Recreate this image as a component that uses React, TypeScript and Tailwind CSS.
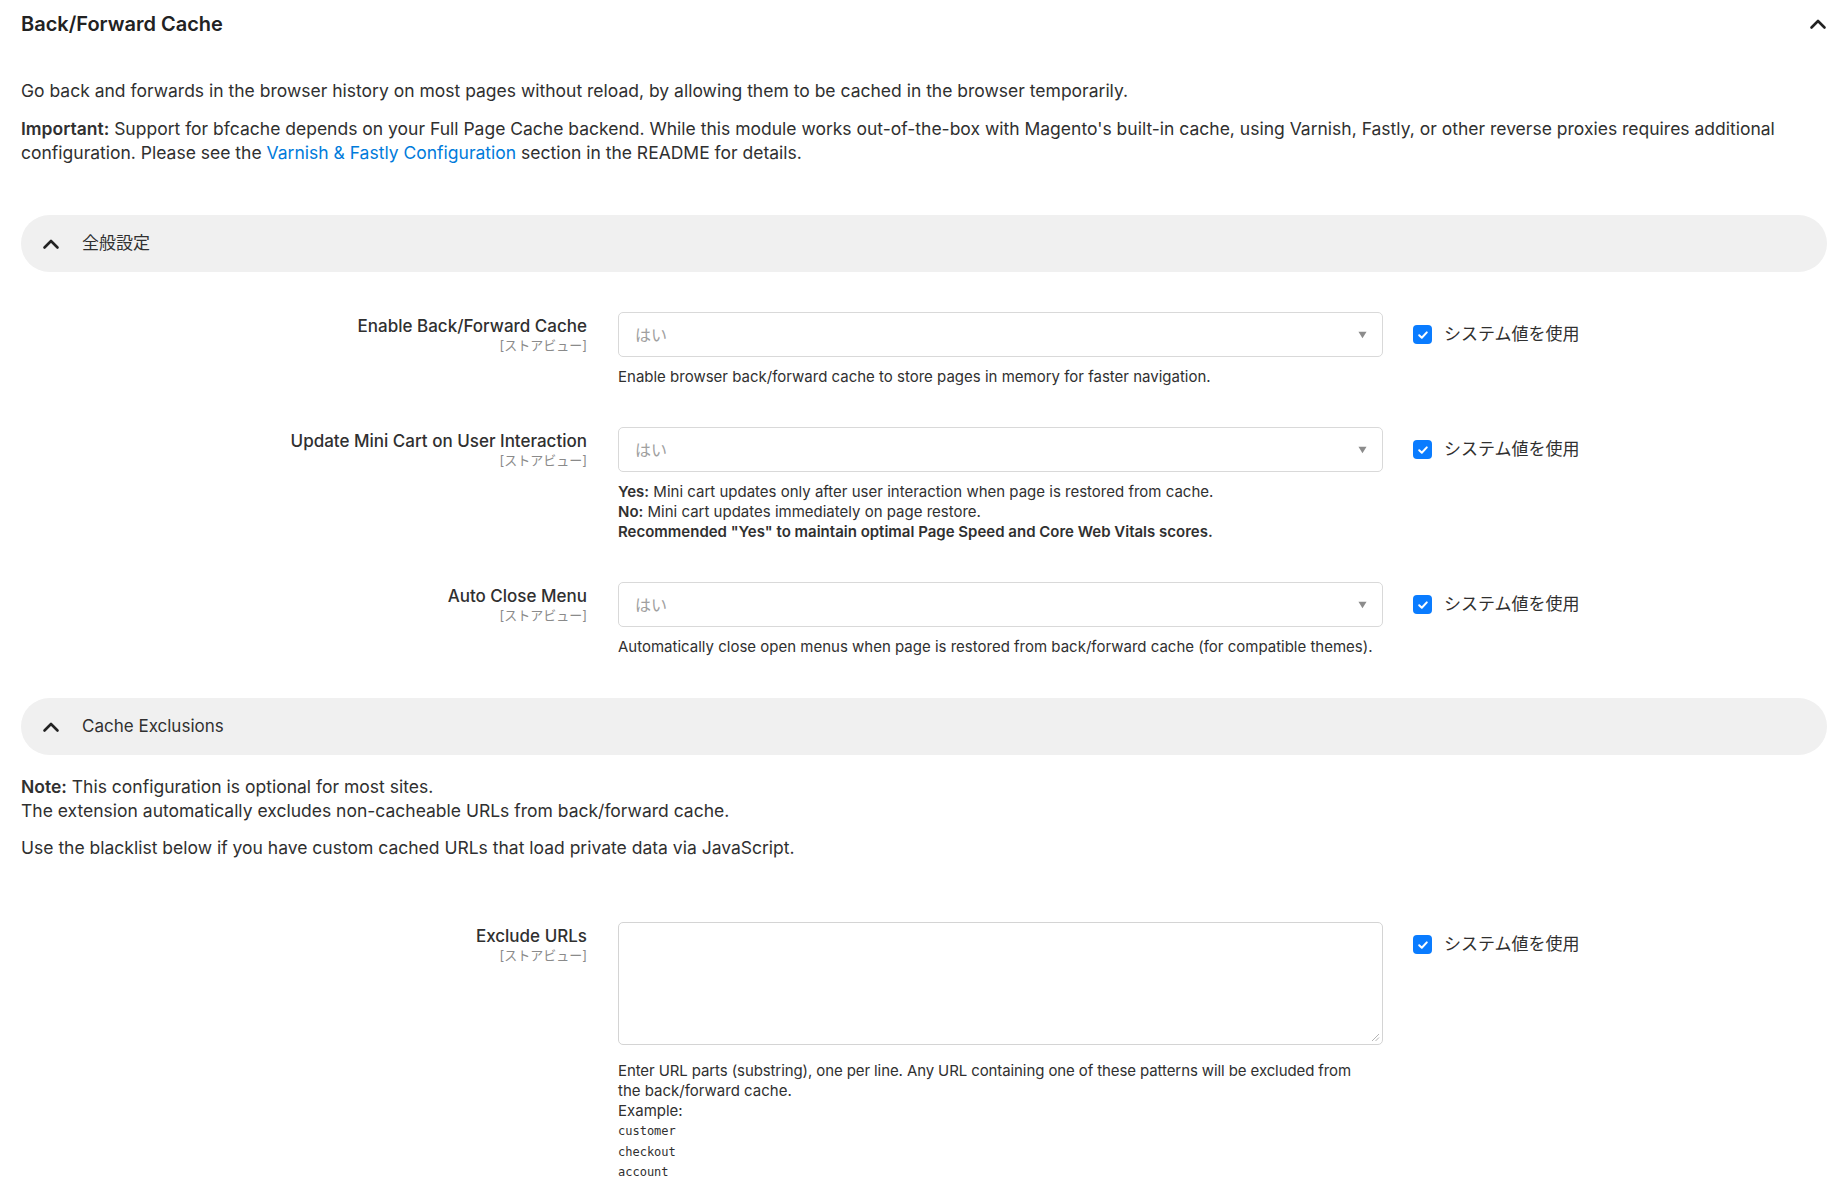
import type { ReactNode } from 'react'

const sans = "font-['Inter','Noto_Sans_CJK_JP',sans-serif]"

function Chevron({ className = '' }: { className?: string }) {
  return (
    <svg viewBox="0 0 18 12" className={className} fill="none">
      <path d="M2.5 9.5 9 3l6.5 6.5" stroke="#222" strokeWidth="2.6" strokeLinecap="round" strokeLinejoin="round" />
    </svg>
  )
}

function SectionPill({ title }: { title: string }) {
  return (
    <div className="flex h-[57px] items-center gap-[22px] rounded-full bg-[#f0f0f0] pl-[21px]">
      <Chevron className="h-[12px] w-[18px]" />
      <span className="text-[17px] text-[#303030]">{title}</span>
    </div>
  )
}

function SystemValue() {
  return (
    <div className="ml-[30px] flex h-[45px] shrink-0 items-center gap-[12px]">
      <span className="flex h-[19px] w-[19px] items-center justify-center rounded-[4px] bg-[#0a7cff]">
        <svg viewBox="0 0 12 12" className="h-[12px] w-[12px]" fill="none">
          <path d="M2.2 6.3 4.8 8.8 9.8 3.4" stroke="white" strokeWidth="2" strokeLinecap="round" strokeLinejoin="round" />
        </svg>
      </span>
      <span className="text-[17px] text-[#303030]">システム値を使用</span>
    </div>
  )
}

function Row({ label, field, help, gap = 'mt-[10px]' }: { label: string; field: ReactNode; help: ReactNode; gap?: string }) {
  return (
    <div className="flex">
      <div className="w-[566px] shrink-0 pt-[4px] text-right">
        <div className="text-[17px] leading-[20px] font-medium text-[#303030]">{label}</div>
        <div className="text-[13px] leading-[18px] text-[#8a8a8a]">[ストアビュー]</div>
      </div>
      <div className="ml-[31px] w-[765px] shrink-0">
        {field}
        <div className={`${gap} text-[15px] leading-[20px] text-[#303030]`}>{help}</div>
      </div>
      <SystemValue />
    </div>
  )
}

function Select() {
  return (
    <div className="flex h-[45px] items-center justify-between rounded-[5px] border border-[#d9d9d9] bg-white pr-[15px] pl-[16px]">
      <span className="text-[16px] text-[#a0a0a0]">はい</span>
      <svg viewBox="0 0 10 8" className="h-[8px] w-[9px]">
        <path d="M0.5 0.5h9L5 7.5z" fill="#8c8c8c" />
      </svg>
    </div>
  )
}

function TextArea() {
  return (
    <div className="relative h-[123px] rounded-[5px] border border-[#d4d4d4] bg-white">
      <svg viewBox="0 0 10 10" className="absolute right-[2px] bottom-[2px] h-[10px] w-[10px]">
        <path d="M2 9 9 2M5.5 9 9 5.5" stroke="#b5b5b5" strokeWidth="1" />
      </svg>
    </div>
  )
}

export default function App() {
  return (
    <div className={`${sans} min-h-[1200px] bg-white pr-[18px] pl-[21px] text-[#303030]`}>
      <div className="flex h-[48px] items-center justify-between">
        <h2 className="text-[20px] font-semibold text-[#222]">Back/Forward Cache</h2>
        <Chevron className="h-[12px] w-[18px]" />
      </div>

      <p className="mt-[31px] text-[17.5px] leading-[24px]">
        Go back and forwards in the browser history on most pages without reload, by allowing them to be cached in the
        browser temporarily.
      </p>
      <p className="mt-[14px] text-[17.5px] leading-[24px]">
        <span className="font-semibold">Important:</span> Support for bfcache depends on your Full Page Cache backend.
        While this module works out-of-the-box with Magento&apos;s built-in cache, using Varnish, Fastly, or other reverse
        proxies requires additional configuration. Please see the{' '}
        <a className="text-[#007bdb]">Varnish &amp; Fastly Configuration</a> section in the README for details.
      </p>

      <div className="mt-[50px]">
        <SectionPill title="全般設定" />
      </div>

      <div className="mt-[40px] flex flex-col gap-[40px]">
        <Row
          label="Enable Back/Forward Cache"
          field={<Select />}
          help="Enable browser back/forward cache to store pages in memory for faster navigation."
        />
        <Row
          label="Update Mini Cart on User Interaction"
          field={<Select />}
          help={
            <>
              <div>
                <span className="font-semibold">Yes:</span> Mini cart updates only after user interaction when page is
                restored from cache.
              </div>
              <div>
                <span className="font-semibold">No:</span> Mini cart updates immediately on page restore.
              </div>
              <div className="font-semibold">
                Recommended &quot;Yes&quot; to maintain optimal Page Speed and Core Web Vitals scores.
              </div>
            </>
          }
        />
        <Row
          label="Auto Close Menu"
          field={<Select />}
          help="Automatically close open menus when page is restored from back/forward cache (for compatible themes)."
        />
      </div>

      <div className="mt-[41px]">
        <SectionPill title="Cache Exclusions" />
      </div>

      <div className="mt-[20px] text-[17.5px] leading-[24px]">
        <p>
          <span className="font-semibold">Note:</span> This configuration is optional for most sites.
        </p>
        <p>The extension automatically excludes non-cacheable URLs from back/forward cache.</p>
        <p className="mt-[13px]">Use the blacklist below if you have custom cached URLs that load private data via JavaScript.</p>
      </div>

      <div className="mt-[62px]">
        <Row
          label="Exclude URLs"
          field={<TextArea />}
          gap="mt-[16px]"
          help={
            <>
              <div className="whitespace-nowrap tracking-[-0.1px]">
                Enter URL parts (substring), one per line. Any URL containing one of these patterns will be excluded from
              </div>
              <div>the back/forward cache.</div>
              <div>Example:</div>
              <div className="font-['DejaVu_Sans_Mono',monospace] text-[12px] leading-[20.5px]">
                <div>customer</div>
                <div>checkout</div>
                <div>account</div>
              </div>
            </>
          }
        />
      </div>
    </div>
  )
}
